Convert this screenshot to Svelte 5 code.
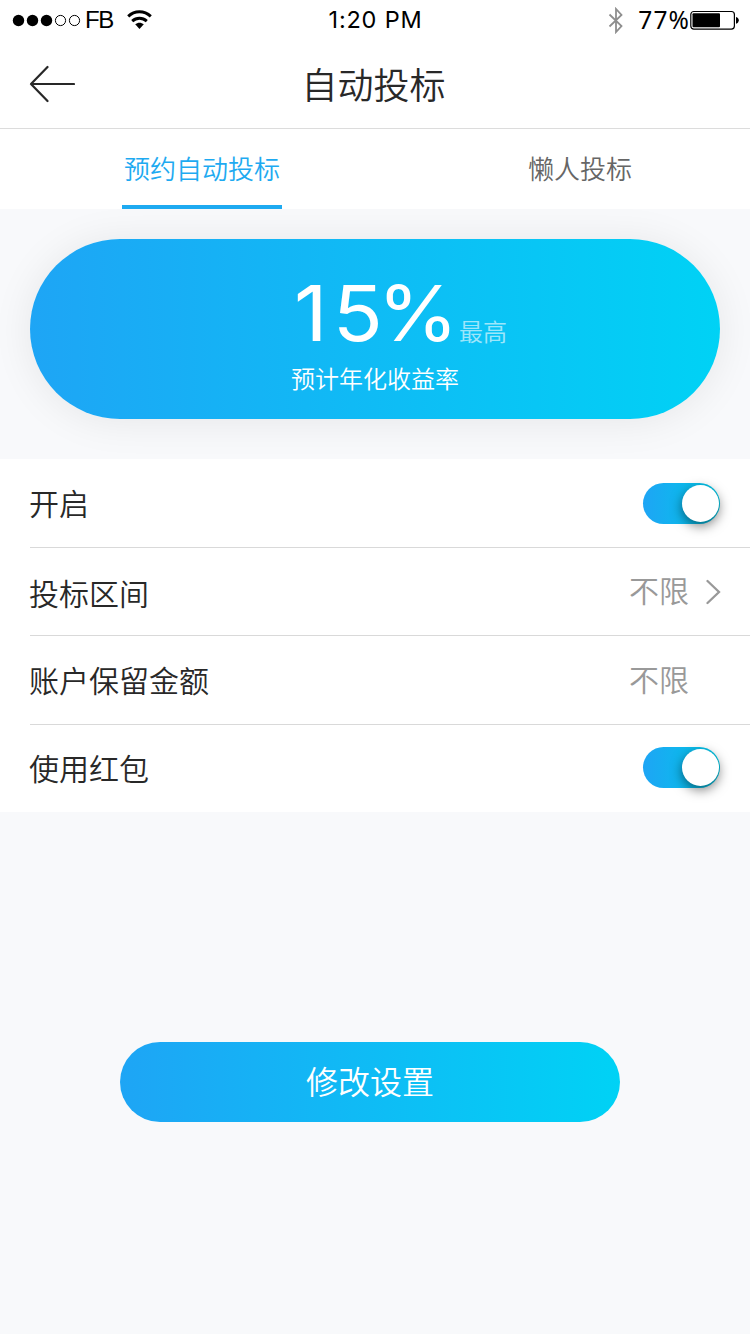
<script>
  let tabs = ['预约自动投标', '懒人投标']
  let current = $state(0)

  let rows = $state([
    { label: '开启', type: 'switch', on: true },
    { label: '投标区间', type: 'link', value: '不限' },
    { label: '账户保留金额', type: 'text', value: '不限' },
    { label: '使用红包', type: 'switch', on: true },
  ])
</script>

<div class="screen">
  <div class="status">
    <div class="carrier">
      <svg width="70" height="14" viewBox="0 0 70 14">
        {#each [0, 1, 2, 3, 4] as n}
          <circle cx={6.5 + n * 14} cy="7.5" r={n < 3 ? 5.7 : 5.1} fill={n < 3 ? '#000' : 'none'} stroke={n < 3 ? 'none' : '#000'} />
        {/each}
      </svg>
      <span>FB</span>
      <svg class="wifi" width="25" height="20" viewBox="0 0 25 20">
        <path d="M1.2 6.4C7.6 .2 17.2 .2 23.8 6.4M5.2 11.1c4.2-3.9 10.3-3.9 14.6 0" fill="none" stroke="#000" stroke-width="2.9" />
        <path d="M8.2 14.3c2.5-2.1 6-2.1 8.6 0L12.5 19z" />
      </svg>
    </div>
    <div class="time">1:20 PM</div>
    <div class="power">
      <svg width="16" height="27" viewBox="0 0 16 27">
        <path d="M1.5 7.5l12 11.5-5.5 6V2l5.5 6-12 11.5" fill="none" stroke="#8e8e8e" stroke-width="1.8" />
      </svg>
      <span>77%</span>
      <svg width="49" height="20" viewBox="0 0 49 20">
        <rect x=".8" y="1.5" width="43.6" height="17.6" rx="3" fill="#fff" stroke="#000" stroke-width="1.2" />
        <rect x="2.5" y="3.3" width="27.5" height="14" rx="1" />
        <path d="M46 7c3.7 .7 3.7 6 0 6.8z" />
      </svg>
    </div>
  </div>

  <header>
    <button class="back" aria-label="返回">
      <svg width="46" height="38" viewBox="0 0 46 38">
        <path d="M18.5 2L2 19l16.5 17M2 19h43" fill="none" stroke="#282828" stroke-width="2.2" stroke-linecap="round" stroke-linejoin="round" />
      </svg>
    </button>
    <h1>自动投标</h1>
  </header>

  <nav>
    {#each tabs as tab, i}
      <button class:active={current === i} onclick={() => (current = i)}>{tab}</button>
    {/each}
  </nav>

  <section class="hero">
    <div class="card">
      <div class="rate"><b><span class="one">1</span><span class="five">5</span>%</b><small>最高</small></div>
      <p>预计年化收益率</p>
    </div>
  </section>

  <ul>
    {#each rows as row}
      <li>
        <span class="label">{row.label}</span>
        {#if row.type === 'switch'}
          <button class="switch" class:on={row.on} aria-label={row.label} onclick={() => (row.on = !row.on)}><i></i></button>
        {:else}
          <span class="value">{row.value}</span>
          {#if row.type === 'link'}
            <svg width="15" height="26" viewBox="0 0 15 26">
              <path d="M1.5 2L13 13 1.5 24" fill="none" stroke="#999" stroke-width="2.3" stroke-linecap="round" />
            </svg>
          {/if}
        {/if}
      </li>
    {/each}
  </ul>

  <button class="submit">修改设置</button>
</div>

<style>
  :global(body) {
    background: #f8f9fb;
  }

  .screen {
    width: 750px;
    height: 1334px;
    overflow: hidden;
    background: #f8f9fb;
    color: #282828;
    font-family: "Noto Sans CJK SC DemiLight", "Noto Sans CJK SC", sans-serif;
    font-weight: 350;
  }

  button {
    padding: 0;
    border: 0;
    background: none;
    color: inherit;
    font: inherit;
    cursor: pointer;
  }

  svg {
    display: block;
    flex: none;
  }

  .status {
    display: grid;
    grid-template-columns: 1fr auto 1fr;
    align-items: center;
    height: 40px;
    padding: 0 11px 0 12px;
    background: #fff;
    color: #000;
    font: 400 23px/40px Inter, sans-serif;
  }

  .carrier, .power {
    display: flex;
    align-items: center;
  }

  .carrier span {
    margin-left: 3px;
    font-family: "Liberation Sans", sans-serif;
    font-size: 24px;
    letter-spacing: -1.3px;
  }

  .wifi {
    margin-left: 14px;
  }

  .time {
    font-size: 23.5px;
    letter-spacing: .8px;
  }

  .power {
    justify-content: flex-end;
  }

  .power span {
    margin: 0 0 0 14px;
    font-family: "Noto Sans", sans-serif;
    font-size: 24.5px;
    letter-spacing: 1.1px;
    line-height: 40px;
    height: 40px;
  }

  header {
    display: grid;
    grid-template-columns: 100px 1fr 103px;
    align-items: center;
    height: 88px;
    background: #fff;
    border-bottom: 1px solid #dcdcdc;
  }

  .back {
    margin-left: 29px;
  }

  h1 {
    margin: 0;
    height: 88px;
    font-size: 36px;
    font-weight: 350;
    line-height: 86px;
    text-align: center;
  }

  nav {
    display: flex;
    gap: 218px;
    height: 80px;
    padding-left: 122px;
    background: #fff;
    font-size: 26px;
  }

  nav button {
    box-sizing: border-box;
    width: 160px;
    border-bottom: 4px solid transparent;
    color: #666;
    line-height: 78px;
  }

  nav .active {
    border-color: #1eaaf1;
    color: #1eaaf1;
  }

  .hero {
    box-sizing: border-box;
    height: 250px;
    padding: 30px;
    overflow: hidden;
  }

  .card {
    height: 180px;
    border-radius: 90px;
    background: linear-gradient(to right, #1ea5f5, #00d2f5);
    box-shadow: 0 2px 40px rgba(0, 0, 0, .08);
    color: #fff;
    overflow: hidden;
  }

  .rate {
    display: flex;
    align-items: baseline;
    height: 121px;
    margin-left: 264px;
    line-height: 148px;
  }

  b {
    width: 158px;
    font-family: Inter, sans-serif;
    font-size: 77px;
    font-weight: 400;
    white-space: nowrap;
    transform: scaleX(1.07);
    transform-origin: left;
  }

  .one {
    letter-spacing: 5px;
  }

  .five {
    letter-spacing: -5px;
  }

  small {
    margin-left: 7px;
    font-size: 24px;
    opacity: .6;
  }

  p {
    margin: 0;
    font-size: 24px;
    line-height: 36px;
    text-align: center;
  }

  ul {
    margin: 0;
    padding: 0 0 0 30px;
    background: #fff;
    list-style: none;
  }

  li {
    display: flex;
    align-items: center;
    box-sizing: border-box;
    height: 89px;
    padding-right: 30px;
    border-bottom: 1px solid #d9d9d9;
    font-size: 30px;
  }

  li:nth-child(2) {
    height: 88px;
  }

  li:last-child {
    height: 87px;
    border: 0;
  }

  .label {
    flex: 1;
    margin: -3px 0 0 -1px;
  }

  li:nth-child(2) .label {
    margin-top: 1px;
  }

  .value {
    margin: -5px 31px 0 0;
    color: #999;
  }

  .value + svg {
    margin-left: -14px;
    margin-right: -1px;
  }

  .switch {
    display: flex;
    align-items: center;
    width: 77px;
    height: 41px;
    margin-top: 1px;
    border-radius: 21px;
    background: #ddd;
  }

  li:last-child .switch {
    margin-top: -2px;
  }

  .switch i {
    width: 37px;
    height: 37px;
    margin-left: 2px;
    border-radius: 50%;
    background: #fff;
    box-shadow: 0 4px 12px rgba(0, 0, 0, .5);
  }

  .switch.on {
    background: linear-gradient(to right, #1ea5f5, #00c8e6);
  }

  .switch.on i {
    margin-left: 39px;
  }

  .submit {
    display: block;
    width: 500px;
    height: 80px;
    margin: 230px 0 0 120px;
    padding-bottom: 4px;
    border-radius: 40px;
    background: linear-gradient(to right, #1ea5f5, #00d2f5);
    color: #fff;
    font-size: 32px;
  }
</style>
